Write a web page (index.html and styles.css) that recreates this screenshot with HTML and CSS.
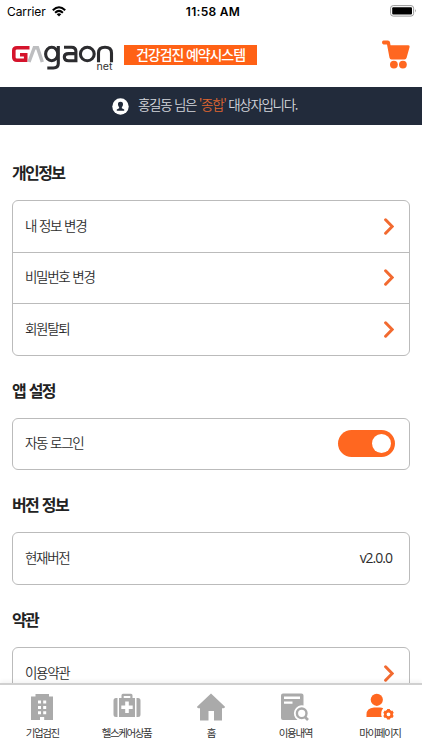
FILE: index.html
```html
<!DOCTYPE html>
<html lang="ko">
<head>
<meta charset="utf-8">
<meta name="viewport" content="width=device-width">
<title>마이페이지</title>
<link rel="stylesheet" href="styles.css">
</head>
<body>
<div class="app">
  <div class="status">
    <div class="carrier"><span>Carrier</span>
      <svg width="14" height="11" viewBox="0 0 14 11"><g fill="none" stroke="#000" stroke-width="2"><path d="M.8 4.3Q7-1.8 13.2 4.3"/><path d="M3.1 6.8Q7 3 10.9 6.8"/></g><path d="M4.7 8.2Q7 6.4 9.3 8.2L7 10.6z"/></svg>
    </div>
    <span class="time">11:58 AM</span>
    <svg class="battery" width="27" height="12" viewBox="0 0 27 12"><rect x=".6" y=".6" width="23" height="10.5" rx="2.6" fill="#fff" stroke="#999"/><rect x="2.2" y="2.2" width="19.8" height="7.3" rx="1"/><path d="M25 4q1.6 1.8 0 3.6z" fill="#888"/></svg>
  </div>
  <header class="header">
    <svg class="logo" width="103" height="34" viewBox="0 0 103 34">
      <path d="M18.500 6.700H6Q2.800 6.700 2.800 9.500v6.700Q2.800 19.200 6 19.200h8.700v-5.400H9" fill="none" stroke="#d5142c" stroke-width="3.600"/>
      <path d="M18 21 23.300 6.700h3.200L31.300 21" fill="none" stroke="#bdbec0" stroke-width="3.400"/>
      <g fill="none" stroke="#2c2c2f" stroke-width="3.100">
        <ellipse cx="40.700" cy="13" rx="6.100" ry="6.700"/><path d="M47.300 5v17.600q0 4.400-5 4.400h-6"/>
        <path d="M53 6.200h7.400q4.500 0 4.500 4.200v10.800M65 12.600h-7.400q-4.300 0-4.300 3.500 0 3.700 4.300 3.700H65"/>
        <ellipse cx="76.300" cy="13" rx="6.900" ry="6.700"/>
        <path d="M87.500 21.200v-9.200Q87.500 6.300 94 6.300q6.500 0 6.500 5.700V21.200"/>
      </g>
      <text class="logo-net" x="85.500" y="28.500" textLength="16" lengthAdjust="spacingAndGlyphs">net</text>
    </svg>
    <span class="tag">건강검진 예약시스템</span>
    <svg class="cart" width="28" height="29" viewBox="0 0 28 29" fill="#ff6720"><path d="M1.500.5h4.400Q7.700.5 8 2.200L8.500 5.300H26.300Q28 5.400 27.600 7L24.600 17.800Q24.100 19.500 22.500 19.500H9.400Q7.900 19.400 7.500 17.800L5 4.400H1.500Q0 4.300 0 2.500T1.500.5z"/><circle cx="11.900" cy="24.600" r="3.900"/><circle cx="20.900" cy="24.600" r="3.900"/></svg>
  </header>
  <div class="banner">
    <svg width="17" height="17" viewBox="0 0 17 17"><circle cx="8.500" cy="8.500" r="8.200" fill="#fff"/><path d="M8.500 3.800c-2 0-2.700 1.300-2.500 3 .1 1.300.8 2 1.200 2.600v.8L4.800 11.400v1.400h7.400v-1.400L9.800 10.200v-.8c.4-.6 1.100-1.300 1.200-2.600.2-1.700-.5-3-2.500-3z" fill="#222b3b"/></svg>
    <p>홍길동 님은 <em>'종합'</em> 대상자입니다.</p>
  </div>
  <main class="content">
    <section>
      <h2>개인정보</h2>
      <ul class="card">
        <li><span>내 정보 변경</span><svg class="chev" width="10" height="17" viewBox="0 0 10 17"><path d="M1.600 1.800 8.200 8.500 1.600 15.200"/></svg></li>
        <li><span>비밀번호 변경</span><svg class="chev" width="10" height="17" viewBox="0 0 10 17"><path d="M1.600 1.800 8.200 8.500 1.600 15.200"/></svg></li>
        <li><span>회원탈퇴</span><svg class="chev" width="10" height="17" viewBox="0 0 10 17"><path d="M1.600 1.800 8.200 8.500 1.600 15.200"/></svg></li>
      </ul>
    </section>
    <section>
      <h2>앱 설정</h2>
      <ul class="card"><li><span>자동 로그인</span><i class="toggle"></i></li></ul>
    </section>
    <section>
      <h2>버전 정보</h2>
      <ul class="card"><li><span>현재버전</span><span class="version">v2.0.0</span></li></ul>
    </section>
    <section>
      <h2>약관</h2>
      <ul class="card"><li><span>이용약관</span><svg class="chev" width="10" height="17" viewBox="0 0 10 17"><path d="M1.600 1.800 8.200 8.500 1.600 15.200"/></svg></li></ul>
    </section>
  </main>
  <nav class="tabs">
    <a><svg width="28" height="28" viewBox="0 0 28 28"><path fill="#aaa" fill-rule="evenodd" d="M7.500 1H21V3.400H25V27H16.200V24H12V27H3V3.400H7.500zM10 7.500v3h3v-3zm5.200 0v3h3v-3zM10 13v3h3v-3zm5.200 0v3h3v-3zM10 18.200v3h3v-3zm5.200 0v3h3v-3z"/></svg><span>기업검진</span></a>
    <a><svg width="28" height="28" viewBox="0 0 28 28"><path fill="#aaa" fill-rule="evenodd" d="M10 .8h8q1.500 0 1.500 1.500V5H22V24H6V5H8.500V2.300Q8.500 .8 10 .8zM10.700 3V5h6.600V3zM12.200 8.600v3.900H8.300v3.600h3.900V20h3.600v-3.900h3.900v-3.600h-3.900V8.600z"/><path fill="#aaa" d="M4.500 5v19H3Q.5 24 .5 21.500V7.500Q.5 5 3 5zM23.500 5H25q2.500 0 2.500 2.500V21.500q0 2.500-2.500 2.500h-1.500z"/></svg><span>헬스케어상품</span></a>
    <a><svg width="28" height="28" viewBox="0 0 28 28"><path d="M14 .5 28 13.800Q28 15.200 26.500 15.200H25V27.500H17V18H11.500V27.500H3V15.200H1.500Q0 15.200 0 13.800z" fill="#aaa"/></svg><span>홈</span></a>
    <a><svg width="28" height="28" viewBox="0 0 28 28"><path fill="#aaa" fill-rule="evenodd" d="M2 .5H20.500Q22.500 .5 22.500 2.500V12.500A8 8 0 0 0 16.500 27H2Q0 27 0 25V2.500Q0 .5 2 .5zM3 3.500V6H19V3.500zM3 8.600v2.200h8.500V8.600z"/><circle cx="20.700" cy="20.300" r="4.800" fill="none" stroke="#aaa" stroke-width="2.400"/><path d="M24 24l3 3" stroke="#aaa" stroke-width="2.600"/></svg><span>이용내역</span></a>
    <a><svg width="28" height="28" viewBox="0 0 28 28"><g fill="#ff6720"><circle cx="10.800" cy="6.800" r="6.100"/><path d="M.5 24v-2.500Q.5 15 8 14.500h6q2 0 3.200.8Q14 19 15.800 24z"/></g><circle cx="22.500" cy="21.300" r="3.200" fill="none" stroke="#ff6720" stroke-width="2.600"/><g stroke="#ff6720" stroke-width="2.800"><path d="M22.500 16v2M22.500 24.600v2M17.900 18.700l1.700 1M25.400 22.900l1.700 1M17.900 23.900l1.700-1M25.400 19.700l1.700-1"/></g></svg><span>마이페이지</span></a>
  </nav>
</div>
</body>
</html>
```
FILE: styles.css
```css
* { box-sizing: border-box; margin: 0; padding: 0; }
body { background: #fff; color: #2c2c2c; font-family: "Noto Sans CJK KR", sans-serif; }
.app { display: flex; flex-direction: column; height: 750px; overflow: hidden; }
svg { display: block; flex: none; }

.status { height: 22px; display: grid; grid-template-columns: 1fr auto 1fr; align-items: center; padding: 0 5px 0 7px; font-family: Inter, sans-serif; font-size: 12px; color: #000; flex: none; }
.carrier { display: flex; align-items: center; gap: 6px; letter-spacing: -.1px; }
.time { font-weight: 600; letter-spacing: .3px; padding-left: 2px; }
.battery { justify-self: end; }

.header { height: 65px; display: flex; align-items: center; padding: 0 12px 0 11px; flex: none; }
.logo { margin-top: 7px; }
.logo-net { font: 400 9.500px Inter, sans-serif; fill: #333; }
.tag { width: 133px; height: 20px; margin-left: 10px; background: #ff6115; color: #fff; font-size: 14px; font-weight: 500; line-height: 19px; letter-spacing: -1.1px; text-align: center; white-space: nowrap; }
.cart { margin-left: auto; }

.banner { height: 38px; display: flex; align-items: center; gap: 9px; padding-left: 112px; background: #222b3b; color: #d3d6dc; font-size: 13.500px; font-weight: 350; letter-spacing: -1.350px; word-spacing: .3px; flex: none; }
.banner p { line-height: 20px; margin-top: -5px; }
.banner em { font-style: normal; color: #df6630; }

.content { flex: 1; min-height: 0; overflow: hidden; padding: 34px 12px 0; }
section { margin-bottom: 21.200px; }
h2 { height: 26px; line-height: 26px; margin-bottom: 15px; font-size: 16px; font-weight: 600; letter-spacing: -1.600px; word-spacing: .7px; color: #222; }
.card { list-style: none; border: 1px solid #bbb; border-radius: 6px; }
.card li { height: 50.500px; display: flex; align-items: center; justify-content: space-between; padding: 0 15px 0 12px; font-size: 13.500px; font-weight: 350; letter-spacing: -1.300px; word-spacing: .4px; }
.card li + li { height: 51.500px; border-top: 1px solid #bbb; }
.card li > span { line-height: 20px; padding-bottom: 3px; }
.chev { fill: none; stroke: #f26a30; stroke-width: 3; stroke-linecap: round; }
.toggle { width: 57px; height: 27px; border-radius: 14px; background: #ff6720; display: flex; justify-content: flex-end; align-items: center; padding-right: 4px; margin-right: -1px; }
.toggle::after { content: ""; width: 19px; height: 19px; border-radius: 50%; background: #fff; }
.card .version { font-family: "Open Sans", sans-serif; font-size: 14px; font-weight: 400; letter-spacing: -1px; margin-right: 2px; padding-bottom: 2px; }

.tabs { height: 67px; border-top: 2px solid #d0d0d0; background: #fff; display: grid; grid-template-columns: repeat(5, 1fr); padding-top: 8px; flex: none; box-shadow: 0 -2px 4px rgba(0,0,0,.05); position: relative; }
.tabs a { display: flex; flex-direction: column; align-items: center; gap: 4px; font-size: 10.500px; line-height: 16px; letter-spacing: -1.400px; white-space: nowrap; color: #333; }
```
